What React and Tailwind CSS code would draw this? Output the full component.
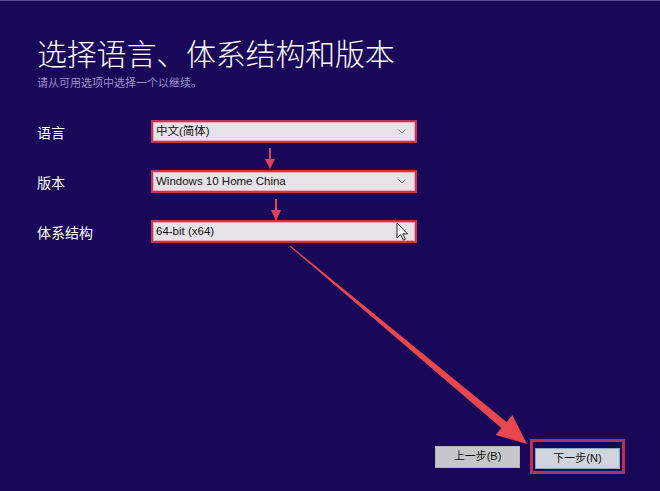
import React from "react";

const cjk = { fontFamily: '"Noto Sans CJK SC", "Noto Sans", sans-serif' };
const mix = { fontFamily: '"Liberation Sans", "Noto Sans CJK SC", sans-serif' };

function Select({ value }) {
  return (
    <div className="w-[266px] h-[23px] border-2 border-[#c93258] bg-[#f2a7b6] p-px">
      <div className="h-full bg-[#e5e3e7] flex items-center justify-between pl-[2px] pr-[6px]">
        <span className="text-[11.5px] text-[#111] leading-none" style={mix}>{value}</span>
        <svg width="8" height="5" viewBox="0 0 8 5" className="mr-[2px]">
          <path d="M0.5 0.5 L4 4 L7.5 0.5" fill="none" stroke="#777" strokeWidth="1" />
        </svg>
      </div>
    </div>
  );
}

function Row({ label, value }) {
  return (
    <div className="flex items-center h-[23px]">
      <div className="w-[114px] text-[14px] text-white leading-none" style={cjk}>{label}</div>
      <Select value={value} />
    </div>
  );
}

export default function App() {
  return (
    <div className="relative w-[660px] h-[491px] overflow-hidden bg-[#190757] border-t border-[#5d4e8e] flex flex-col">
      <div className="pl-[37px] pt-[34px]">
        <h1 className="text-[30px] leading-[34px] text-white font-light tracking-[-0.2px]" style={cjk}>
          选择语言、体系结构和版本
        </h1>
        <p className="mt-[7px] text-[11px] leading-[12px] text-[#9c8fcc]" style={cjk}>
          请从可用选项中选择一个以继续。
        </p>
        <div className="mt-[32px] flex flex-col gap-[27px]">
          <Row label="语言" value="中文(简体)" />
          <Row label="版本" value="Windows 10 Home China" />
          <Row label="体系结构" value="64-bit (x64)" />
        </div>
      </div>

      <div className="mt-auto mb-[17px] mr-[35px] flex justify-end items-center gap-[10px]">
        <button className="w-[85px] h-[22px] bg-[#c7c7c9] border border-[#b5b5b8] text-[11px] text-[#111] leading-none" style={mix}>
          上一步(B)
        </button>
        <div className="border-[3px] border-[#b8314f] p-[2px]">
          <button className="w-[85px] h-[21px] bg-[#cfd5dd] border border-[#8fa7c4] text-[11px] text-[#111] leading-none" style={mix}>
            下一步(N)
          </button>
        </div>
      </div>

      <svg className="absolute inset-0 pointer-events-none" width="660" height="491" viewBox="0 0 660 491">
        <rect x="269" y="147" width="2" height="12" fill="#e2405d" />
        <polygon points="265,158 275,158 270,168" fill="#e2405d" />
        <rect x="275" y="198" width="2" height="12" fill="#e2405d" />
        <polygon points="271,209 281,209 276,220" fill="#e2405d" />
        <polygon
          points="290.3,244.6 506.6,420.9 512.3,414 527,443 495.7,434 501.4,427.1 289.7,245.4"
          fill="#e8474f"
        />
        <path
          d="M397 222 L397 237 L400.6 233.6 L403.4 239.2 L405.4 238.3 L402.7 232.9 L407.6 232.9 Z"
          fill="#fff"
          stroke="#222"
          strokeWidth="1"
          strokeLinejoin="round"
        />
      </svg>
    </div>
  );
}
